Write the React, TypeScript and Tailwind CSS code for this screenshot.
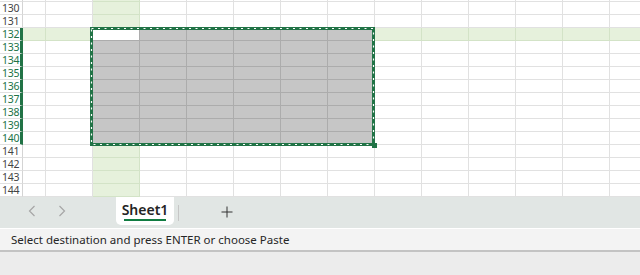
import React from 'react';

const ROWS = Array.from({ length: 16 }, (_, i) => 129 + i);
const COLS = Array.from({ length: 13 }, (_, i) => i);

const SEL_ROW_FIRST = 132;
const SEL_ROW_LAST = 140;
const SEL_COL_FIRST = 1;
const SEL_COL_LAST = 6;
const ACTIVE_COL = 1;

const cellClass = (row: number, col: number): string => {
    const inRows = row >= SEL_ROW_FIRST && row <= SEL_ROW_LAST;
    const inCols = col >= SEL_COL_FIRST && col <= SEL_COL_LAST;
    if (inRows && inCols) {
        if (row === SEL_ROW_FIRST && col === ACTIVE_COL) return 'bg-white border-[#acacac]';
        return 'bg-[#c6c6c6] border-[#acacac]';
    }
    if (row === SEL_ROW_FIRST || col === ACTIVE_COL) return 'bg-[#e6f1dc] border-[#d3e3c7]';
    return 'bg-white border-[#e1e1e1]';
};

const App: React.FC = () => {
    return (
        <div className="flex h-[275px] w-[640px] flex-col overflow-hidden bg-[#ececec] font-['Noto_Sans',sans-serif]">
            {/* Grid */}
            <div className="relative h-[197px] shrink-0 overflow-hidden bg-white">
                <div className="mt-[-11px] flex flex-col">
                    {ROWS.map((row) => {
                        const selected = row >= SEL_ROW_FIRST && row <= SEL_ROW_LAST;
                        return (
                            <div key={row} className="flex h-[13px]">
                                <div
                                    className={`flex h-[13px] w-[23px] shrink-0 items-center overflow-hidden border-b border-b-[#e1e1e1] bg-white pl-[2px] text-[10.5px] leading-[11px] tracking-[-0.2px] ${
                                        selected ? 'border-r-[3px] border-r-[#217346] text-[#217346]' : 'border-r border-r-[#d4d4d4] text-[#444444]'
                                    }`}
                                >
                                    {row > 129 ? row : ''}
                                </div>
                                <div
                                    className={`h-[13px] w-[23px] shrink-0 border-r border-b ${
                                        row === SEL_ROW_FIRST ? 'bg-[#e6f1dc] border-[#d3e3c7]' : 'bg-white border-[#e1e1e1]'
                                    }`}
                                />
                                {COLS.map((col) => (
                                    <div key={col} className={`h-[13px] w-[47px] shrink-0 border-r border-b ${cellClass(row, col)}`} />
                                ))}
                            </div>
                        );
                    })}
                </div>

                {/* Copy marquee */}
                <svg className="absolute top-[27px] left-[90px]" width="290" height="124" viewBox="0 0 290 124">
                    <rect x="1.5" y="1.5" width="282" height="116" fill="none" stroke="#217346" strokeWidth="3" />
                    <rect x="1.5" y="1.5" width="282" height="116" fill="none" stroke="#ffffff" strokeWidth="1.2" strokeDasharray="2 4.5" />
                    <rect x="282" y="116" width="5" height="5" fill="#217346" />
                </svg>
            </div>

            {/* Sheet tabs */}
            <div className="flex h-[31px] shrink-0 items-start bg-[#e1e6e4]">
                <div className="flex h-[28px] items-center gap-[22px] pl-[28px]">
                    <svg width="8" height="12" viewBox="0 0 8 12">
                        <path d="M6.5 1 L1.5 6 L6.5 11" fill="none" stroke="#a6a6a6" strokeWidth="1.2" />
                    </svg>
                    <svg width="8" height="12" viewBox="0 0 8 12">
                        <path d="M1.5 1 L6.5 6 L1.5 11" fill="none" stroke="#a6a6a6" strokeWidth="1.2" />
                    </svg>
                </div>
                <div className="ml-[50px] flex h-[28px] w-[58px] flex-col items-center rounded-b-[5px] bg-white pt-[4px]">
                    <span className="text-[14px] leading-[17px] font-semibold text-[#242424]">Sheet1</span>
                    <span className="mt-[1px] h-[2px] w-[42px] bg-[#107c41]" />
                </div>
                <div className="mt-[8px] ml-[4px] h-[16px] w-px bg-[#c6c6c6]" />
                <div className="mt-[9px] ml-[42px]">
                    <svg width="12" height="12" viewBox="0 0 12 12">
                        <path d="M6 0.5 V11.5 M0.5 6 H11.5" fill="none" stroke="#333333" strokeWidth="1" />
                    </svg>
                </div>
            </div>

            {/* Status bar */}
            <div className="flex h-[24px] shrink-0 items-center border-t border-t-white border-b-2 border-b-[#c3c3c3] bg-[#f3f3f3] pl-[11px] text-[11.5px] text-[#262626]">
                Select destination and press ENTER or choose Paste
            </div>
        </div>
    );
};

export default App;
